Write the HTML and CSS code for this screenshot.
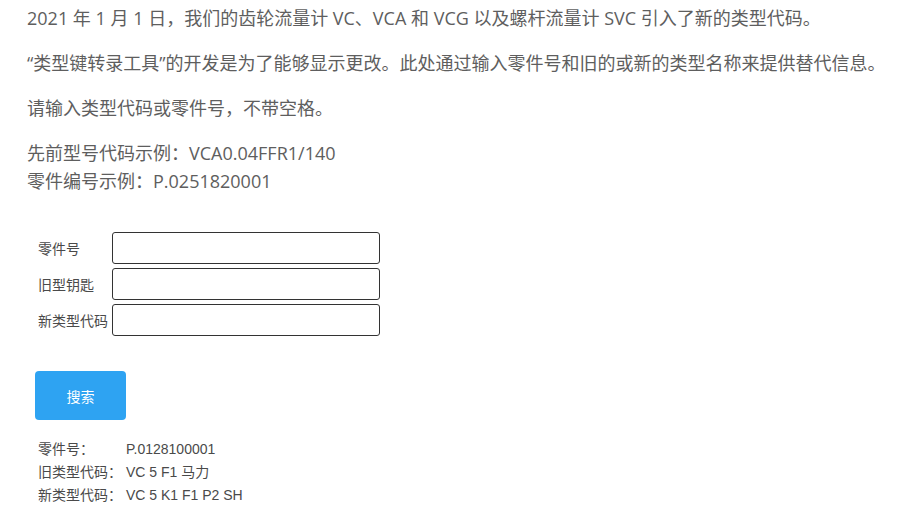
FILE: index.html
```html
<!DOCTYPE html>
<html lang="zh">
<head>
    <meta charset="UTF-8">
    <meta name="viewport" content="width=device-width, initial-scale=1.0">
    <title>类型键转录工具</title>
    <link rel="stylesheet" href="styles.css">
</head>
<body>
    <div class="page">
        <!-- Intro -->
        <p>2021 年 1 月 1 日，我们的齿轮流量计 VC、VCA 和 VCG 以及螺杆流量计 SVC 引入了新的类型代码。</p>
        <p>“类型键转录工具”的开发是为了能够显示更改。此处通过输入零件号和旧的或新的类型名称来提供替代信息。</p>
        <p>请输入类型代码或零件号，不带空格。</p>
        <p>先前型号代码示例：VCA0.04FFR1/140<br>零件编号示例：P.0251820001</p>

        <!-- Search form -->
        <form class="search-form">
            <div class="field">
                <label for="partNo">零件号</label>
                <input type="text" id="partNo">
            </div>
            <div class="field">
                <label for="oldKey">旧型钥匙</label>
                <input type="text" id="oldKey">
            </div>
            <div class="field">
                <label for="newCode">新类型代码</label>
                <input type="text" id="newCode">
            </div>
            <button type="button" class="search-btn">搜索</button>
        </form>

        <!-- Result -->
        <div class="result">
            <span class="result-label">零件号：</span><span>P.0128100001</span>
            <span class="result-label">旧类型代码：</span><span>VC 5 F1 马力</span>
            <span class="result-label">新类型代码：</span><span>VC 5 K1 F1 P2 SH</span>
        </div>
    </div>
</body>
</html>
```

FILE: styles.css
```css
* {
    margin: 0;
    padding: 0;
    box-sizing: border-box;
}

body {
    background: #fff;
    color: #5e5e5e;
    font-family: 'Open Sans', 'Noto Sans CJK SC', sans-serif;
}

.page {
    padding: 4px 0 0 27px;
}

.page p {
    font-size: 18px;
    line-height: 28px;
    margin-bottom: 17px;
}

/* Search form */
.search-form {
    margin-top: 37px;
    padding-left: 8px;
    font-family: 'Liberation Sans', 'Noto Sans CJK SC', sans-serif;
}

.field {
    display: flex;
    align-items: center;
    margin-bottom: 4px;
}

.field label {
    width: 77px;
    padding-left: 3px;
    font-size: 14px;
    color: #4a4a4a;
}

.field input {
    width: 268px;
    height: 32px;
    border: 1px solid #333;
    border-radius: 3px;
    background: #fff;
}

.search-btn {
    display: block;
    margin-top: 35px;
    width: 91px;
    height: 49px;
    border: none;
    border-radius: 4px;
    background: #2ea3f2;
    color: #fff;
    font-family: 'Liberation Sans', 'Noto Sans CJK SC', sans-serif;
    font-size: 14px;
}

/* Result */
.result {
    display: grid;
    grid-template-columns: 88px auto;
    margin-top: 18px;
    padding-left: 11px;
    font-family: 'Liberation Sans', 'Noto Sans CJK SC', sans-serif;
    font-size: 14px;
    line-height: 23px;
    color: #4a4a4a;
}
```
